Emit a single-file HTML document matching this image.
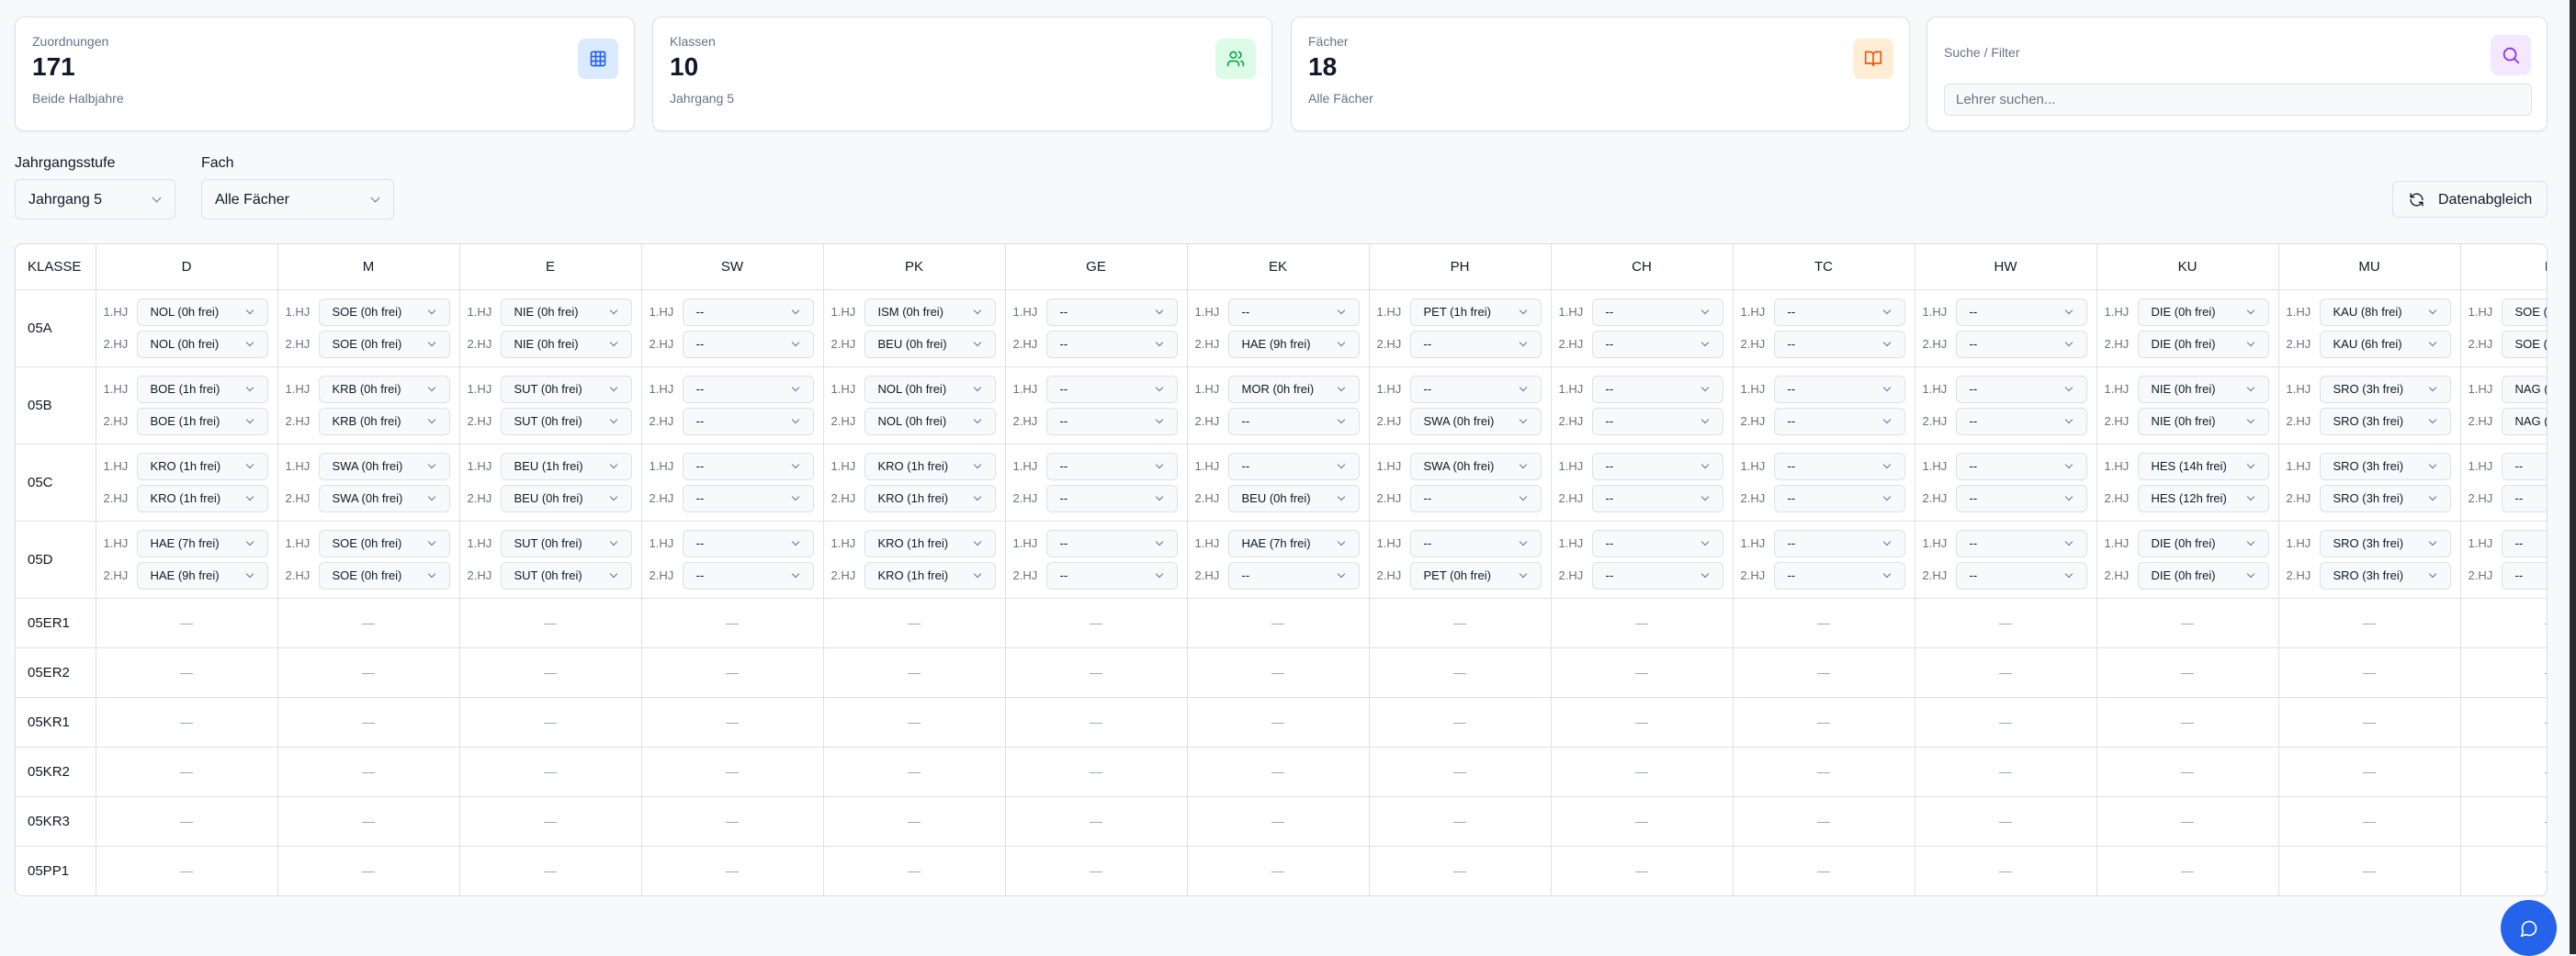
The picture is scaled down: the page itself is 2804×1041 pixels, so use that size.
<!DOCTYPE html>
<html><head><meta charset="utf-8"><style>
*{box-sizing:border-box;margin:0;padding:0}
body{width:2804px;height:1039px;background:#f8f9fb;font-family:"Liberation Sans",sans-serif;color:#111827;position:relative;overflow:hidden}
.sb{position:absolute;right:0;top:0;width:7px;height:1039px;background:#2b2b2f}
.card{position:absolute;top:18px;height:125px;background:#fff;border:1px solid #dde0e5;border-radius:10px;box-shadow:0 1px 2px rgba(0,0,0,.05)}
.card .l{position:absolute;left:18px;top:18px;font-size:14px;color:#64748b}
.card .n{position:absolute;left:18px;top:38px;font-size:28px;font-weight:bold;color:#0f172a}
.card .s{position:absolute;left:18px;top:80px;font-size:14px;color:#64748b}
.ic{position:absolute;right:17px;top:23px;width:44px;height:44px;border-radius:8px;display:flex;align-items:center;justify-content:center}
.lab{position:absolute;top:169px;font-size:16px;color:#111827}
.sel{position:absolute;top:195px;height:44px;border:1px solid #dde0e5;border-radius:6px;background:#f8f9fb;font-size:16px;padding:13px 14px}
.chev{position:absolute;right:16px;top:16px;width:7px;height:7px;border-right:1.5px solid #6b7280;border-bottom:1.5px solid #6b7280;transform:rotate(45deg)}
.btn{position:absolute;left:2604px;top:197px;width:169px;height:40px;border:1px solid #dde0e5;border-radius:6px;background:#f8f9fb;font-size:16px;padding:11px 0 0 49px}
.tw{position:absolute;left:16px;top:265px;width:2757px;height:711px;border:1px solid #d8dce2;border-radius:8px;background:#fff;overflow:hidden}
table{border-collapse:collapse;table-layout:fixed;width:2858px}
td,th{border-right:1px solid #dde0e5;border-bottom:1px solid #dde0e5}
th{height:49px;font-size:15px;font-weight:normal;color:#111827;text-align:center}
th.k{text-align:left;padding-left:13px}
td.k{font-size:15px;padding-left:13px;text-align:left;color:#111827}
tr.d td{height:84px}
tr.e td{height:54px;text-align:center;color:#9ca3af;font-size:14px}
td.c{padding:0 10px 0 8px}
.r{display:flex;align-items:center;height:30px}
.r+.r{margin-top:5px}
.r i{font-style:normal;font-size:13px;color:#6b7280;width:36px;flex:none}
.r b{position:relative;flex:1;height:30px;border:1px solid #dde0e5;border-radius:6px;background:#f8f9fb;font-weight:normal;font-size:13px;line-height:28px;padding-left:14px;color:#111827;white-space:nowrap;overflow:hidden}
.r b::after{content:"";position:absolute;right:16px;top:9px;width:5px;height:5px;border-right:1.3px solid #6b7280;border-bottom:1.3px solid #6b7280;transform:rotate(45deg)}
tr.e td.k{color:#111827;font-size:15px;text-align:left}
.fab{position:absolute;left:2722px;top:980px;width:61px;height:61px;border-radius:50%;background:#2563eb;display:flex;align-items:center;justify-content:center}
</style></head><body>
<div class="card" style="left:16px;width:675px"><div class="l">Zuordnungen</div><div class="n">171</div><div class="s">Beide Halbjahre</div>
<div class="ic" style="background:#dbeafe"><svg width="20" height="20" viewBox="0 0 24 24" fill="none" stroke="#2563eb" stroke-width="2"><rect x="3" y="3" width="18" height="18" rx="2"/><path d="M3 9h18M3 15h18M9 3v18M15 3v18"/></svg></div></div>
<div class="card" style="left:710px;width:675px"><div class="l">Klassen</div><div class="n">10</div><div class="s">Jahrgang 5</div>
<div class="ic" style="background:#dcfce7"><svg width="20" height="20" viewBox="0 0 24 24" fill="none" stroke="#16a34a" stroke-width="2" stroke-linecap="round"><path d="M16 21v-2a4 4 0 0 0-4-4H6a4 4 0 0 0-4 4v2"/><circle cx="9" cy="7" r="4"/><path d="M22 21v-2a4 4 0 0 0-3-3.87M16 3.13a4 4 0 0 1 0 7.75"/></svg></div></div>
<div class="card" style="left:1405px;width:674px"><div class="l">Fächer</div><div class="n">18</div><div class="s">Alle Fächer</div>
<div class="ic" style="background:#ffedd5"><svg width="20" height="20" viewBox="0 0 24 24" fill="none" stroke="#ea580c" stroke-width="2" stroke-linejoin="round"><path d="M2 3h6a4 4 0 0 1 4 4v14a3 3 0 0 0-3-3H2zM22 3h-6a4 4 0 0 0-4 4v14a3 3 0 0 1 3-3h7z"/></svg></div></div>
<div class="card" style="left:2097px;width:676px"><div class="l" style="top:30px">Suche / Filter</div>
<div class="ic" style="background:#f3e8ff;top:19px"><svg width="22" height="22" viewBox="0 0 24 24" fill="none" stroke="#9333ea" stroke-width="2" stroke-linecap="round"><circle cx="11" cy="11" r="7"/><path d="M21 21l-4.3-4.3"/></svg></div>
<div style="position:absolute;left:18px;top:72px;width:640px;height:35px;border:1px solid #dde0e5;border-radius:6px;background:#f8f9fb;font-size:15px;color:#6b7280;padding:8px 12px">Lehrer suchen...</div></div>
<div class="lab" style="left:16px">Jahrgangsstufe</div><div class="lab" style="left:219px">Fach</div>
<div class="sel" style="left:16px;width:175px">Jahrgang 5<span class="chev"></span></div>
<div class="sel" style="left:219px;width:210px">Alle Fächer<span class="chev"></span></div>
<div class="btn"><svg style="position:absolute;left:17px;top:11px" width="17" height="17" viewBox="0 0 24 24" fill="none" stroke="#111827" stroke-width="2" stroke-linecap="round" stroke-linejoin="round"><path d="M21 12a9 9 0 0 0-15.5-6.2L3 8M3 3v5h5M3 12a9 9 0 0 0 15.5 6.2L21 16M21 21v-5h-5"/></svg>Datenabgleich</div>
<div class="tw"><table>
<colgroup><col style="width:87px"><col span="14" style="width:198px"></colgroup>
<tr><th class="k">KLASSE</th><th>D</th><th>M</th><th>E</th><th>SW</th><th>PK</th><th>GE</th><th>EK</th><th>PH</th><th>CH</th><th>TC</th><th>HW</th><th>KU</th><th>MU</th><th>BI</th></tr>
<tr class="d"><td class="k">05A</td>
<td class="c"><div class="r"><i>1.HJ</i><b>NOL (0h frei)</b></div><div class="r"><i>2.HJ</i><b>NOL (0h frei)</b></div></td>
<td class="c"><div class="r"><i>1.HJ</i><b>SOE (0h frei)</b></div><div class="r"><i>2.HJ</i><b>SOE (0h frei)</b></div></td>
<td class="c"><div class="r"><i>1.HJ</i><b>NIE (0h frei)</b></div><div class="r"><i>2.HJ</i><b>NIE (0h frei)</b></div></td>
<td class="c"><div class="r"><i>1.HJ</i><b>--</b></div><div class="r"><i>2.HJ</i><b>--</b></div></td>
<td class="c"><div class="r"><i>1.HJ</i><b>ISM (0h frei)</b></div><div class="r"><i>2.HJ</i><b>BEU (0h frei)</b></div></td>
<td class="c"><div class="r"><i>1.HJ</i><b>--</b></div><div class="r"><i>2.HJ</i><b>--</b></div></td>
<td class="c"><div class="r"><i>1.HJ</i><b>--</b></div><div class="r"><i>2.HJ</i><b>HAE (9h frei)</b></div></td>
<td class="c"><div class="r"><i>1.HJ</i><b>PET (1h frei)</b></div><div class="r"><i>2.HJ</i><b>--</b></div></td>
<td class="c"><div class="r"><i>1.HJ</i><b>--</b></div><div class="r"><i>2.HJ</i><b>--</b></div></td>
<td class="c"><div class="r"><i>1.HJ</i><b>--</b></div><div class="r"><i>2.HJ</i><b>--</b></div></td>
<td class="c"><div class="r"><i>1.HJ</i><b>--</b></div><div class="r"><i>2.HJ</i><b>--</b></div></td>
<td class="c"><div class="r"><i>1.HJ</i><b>DIE (0h frei)</b></div><div class="r"><i>2.HJ</i><b>DIE (0h frei)</b></div></td>
<td class="c"><div class="r"><i>1.HJ</i><b>KAU (8h frei)</b></div><div class="r"><i>2.HJ</i><b>KAU (6h frei)</b></div></td>
<td class="c"><div class="r"><i>1.HJ</i><b>SOE (0h frei)</b></div><div class="r"><i>2.HJ</i><b>SOE (0h frei)</b></div></td></tr>
<tr class="d"><td class="k">05B</td>
<td class="c"><div class="r"><i>1.HJ</i><b>BOE (1h frei)</b></div><div class="r"><i>2.HJ</i><b>BOE (1h frei)</b></div></td>
<td class="c"><div class="r"><i>1.HJ</i><b>KRB (0h frei)</b></div><div class="r"><i>2.HJ</i><b>KRB (0h frei)</b></div></td>
<td class="c"><div class="r"><i>1.HJ</i><b>SUT (0h frei)</b></div><div class="r"><i>2.HJ</i><b>SUT (0h frei)</b></div></td>
<td class="c"><div class="r"><i>1.HJ</i><b>--</b></div><div class="r"><i>2.HJ</i><b>--</b></div></td>
<td class="c"><div class="r"><i>1.HJ</i><b>NOL (0h frei)</b></div><div class="r"><i>2.HJ</i><b>NOL (0h frei)</b></div></td>
<td class="c"><div class="r"><i>1.HJ</i><b>--</b></div><div class="r"><i>2.HJ</i><b>--</b></div></td>
<td class="c"><div class="r"><i>1.HJ</i><b>MOR (0h frei)</b></div><div class="r"><i>2.HJ</i><b>--</b></div></td>
<td class="c"><div class="r"><i>1.HJ</i><b>--</b></div><div class="r"><i>2.HJ</i><b>SWA (0h frei)</b></div></td>
<td class="c"><div class="r"><i>1.HJ</i><b>--</b></div><div class="r"><i>2.HJ</i><b>--</b></div></td>
<td class="c"><div class="r"><i>1.HJ</i><b>--</b></div><div class="r"><i>2.HJ</i><b>--</b></div></td>
<td class="c"><div class="r"><i>1.HJ</i><b>--</b></div><div class="r"><i>2.HJ</i><b>--</b></div></td>
<td class="c"><div class="r"><i>1.HJ</i><b>NIE (0h frei)</b></div><div class="r"><i>2.HJ</i><b>NIE (0h frei)</b></div></td>
<td class="c"><div class="r"><i>1.HJ</i><b>SRO (3h frei)</b></div><div class="r"><i>2.HJ</i><b>SRO (3h frei)</b></div></td>
<td class="c"><div class="r"><i>1.HJ</i><b>NAG (1h frei)</b></div><div class="r"><i>2.HJ</i><b>NAG (1h frei)</b></div></td></tr>
<tr class="d"><td class="k">05C</td>
<td class="c"><div class="r"><i>1.HJ</i><b>KRO (1h frei)</b></div><div class="r"><i>2.HJ</i><b>KRO (1h frei)</b></div></td>
<td class="c"><div class="r"><i>1.HJ</i><b>SWA (0h frei)</b></div><div class="r"><i>2.HJ</i><b>SWA (0h frei)</b></div></td>
<td class="c"><div class="r"><i>1.HJ</i><b>BEU (1h frei)</b></div><div class="r"><i>2.HJ</i><b>BEU (0h frei)</b></div></td>
<td class="c"><div class="r"><i>1.HJ</i><b>--</b></div><div class="r"><i>2.HJ</i><b>--</b></div></td>
<td class="c"><div class="r"><i>1.HJ</i><b>KRO (1h frei)</b></div><div class="r"><i>2.HJ</i><b>KRO (1h frei)</b></div></td>
<td class="c"><div class="r"><i>1.HJ</i><b>--</b></div><div class="r"><i>2.HJ</i><b>--</b></div></td>
<td class="c"><div class="r"><i>1.HJ</i><b>--</b></div><div class="r"><i>2.HJ</i><b>BEU (0h frei)</b></div></td>
<td class="c"><div class="r"><i>1.HJ</i><b>SWA (0h frei)</b></div><div class="r"><i>2.HJ</i><b>--</b></div></td>
<td class="c"><div class="r"><i>1.HJ</i><b>--</b></div><div class="r"><i>2.HJ</i><b>--</b></div></td>
<td class="c"><div class="r"><i>1.HJ</i><b>--</b></div><div class="r"><i>2.HJ</i><b>--</b></div></td>
<td class="c"><div class="r"><i>1.HJ</i><b>--</b></div><div class="r"><i>2.HJ</i><b>--</b></div></td>
<td class="c"><div class="r"><i>1.HJ</i><b>HES (14h frei)</b></div><div class="r"><i>2.HJ</i><b>HES (12h frei)</b></div></td>
<td class="c"><div class="r"><i>1.HJ</i><b>SRO (3h frei)</b></div><div class="r"><i>2.HJ</i><b>SRO (3h frei)</b></div></td>
<td class="c"><div class="r"><i>1.HJ</i><b>--</b></div><div class="r"><i>2.HJ</i><b>--</b></div></td></tr>
<tr class="d"><td class="k">05D</td>
<td class="c"><div class="r"><i>1.HJ</i><b>HAE (7h frei)</b></div><div class="r"><i>2.HJ</i><b>HAE (9h frei)</b></div></td>
<td class="c"><div class="r"><i>1.HJ</i><b>SOE (0h frei)</b></div><div class="r"><i>2.HJ</i><b>SOE (0h frei)</b></div></td>
<td class="c"><div class="r"><i>1.HJ</i><b>SUT (0h frei)</b></div><div class="r"><i>2.HJ</i><b>SUT (0h frei)</b></div></td>
<td class="c"><div class="r"><i>1.HJ</i><b>--</b></div><div class="r"><i>2.HJ</i><b>--</b></div></td>
<td class="c"><div class="r"><i>1.HJ</i><b>KRO (1h frei)</b></div><div class="r"><i>2.HJ</i><b>KRO (1h frei)</b></div></td>
<td class="c"><div class="r"><i>1.HJ</i><b>--</b></div><div class="r"><i>2.HJ</i><b>--</b></div></td>
<td class="c"><div class="r"><i>1.HJ</i><b>HAE (7h frei)</b></div><div class="r"><i>2.HJ</i><b>--</b></div></td>
<td class="c"><div class="r"><i>1.HJ</i><b>--</b></div><div class="r"><i>2.HJ</i><b>PET (0h frei)</b></div></td>
<td class="c"><div class="r"><i>1.HJ</i><b>--</b></div><div class="r"><i>2.HJ</i><b>--</b></div></td>
<td class="c"><div class="r"><i>1.HJ</i><b>--</b></div><div class="r"><i>2.HJ</i><b>--</b></div></td>
<td class="c"><div class="r"><i>1.HJ</i><b>--</b></div><div class="r"><i>2.HJ</i><b>--</b></div></td>
<td class="c"><div class="r"><i>1.HJ</i><b>DIE (0h frei)</b></div><div class="r"><i>2.HJ</i><b>DIE (0h frei)</b></div></td>
<td class="c"><div class="r"><i>1.HJ</i><b>SRO (3h frei)</b></div><div class="r"><i>2.HJ</i><b>SRO (3h frei)</b></div></td>
<td class="c"><div class="r"><i>1.HJ</i><b>--</b></div><div class="r"><i>2.HJ</i><b>--</b></div></td></tr>
<tr class="e"><td class="k">05ER1</td><td>—</td><td>—</td><td>—</td><td>—</td><td>—</td><td>—</td><td>—</td><td>—</td><td>—</td><td>—</td><td>—</td><td>—</td><td>—</td><td>—</td></tr>
<tr class="e"><td class="k">05ER2</td><td>—</td><td>—</td><td>—</td><td>—</td><td>—</td><td>—</td><td>—</td><td>—</td><td>—</td><td>—</td><td>—</td><td>—</td><td>—</td><td>—</td></tr>
<tr class="e"><td class="k">05KR1</td><td>—</td><td>—</td><td>—</td><td>—</td><td>—</td><td>—</td><td>—</td><td>—</td><td>—</td><td>—</td><td>—</td><td>—</td><td>—</td><td>—</td></tr>
<tr class="e"><td class="k">05KR2</td><td>—</td><td>—</td><td>—</td><td>—</td><td>—</td><td>—</td><td>—</td><td>—</td><td>—</td><td>—</td><td>—</td><td>—</td><td>—</td><td>—</td></tr>
<tr class="e"><td class="k">05KR3</td><td>—</td><td>—</td><td>—</td><td>—</td><td>—</td><td>—</td><td>—</td><td>—</td><td>—</td><td>—</td><td>—</td><td>—</td><td>—</td><td>—</td></tr>
<tr class="e"><td class="k">05PP1</td><td>—</td><td>—</td><td>—</td><td>—</td><td>—</td><td>—</td><td>—</td><td>—</td><td>—</td><td>—</td><td>—</td><td>—</td><td>—</td><td>—</td></tr>
</table></div>
<div class="fab"><svg width="20" height="20" viewBox="0 0 24 24" fill="none" stroke="#fff" stroke-width="2" stroke-linejoin="round"><path d="M7.9 20A9 9 0 1 0 4 16.1L2 22z"/></svg></div>
<div class="sb"></div>
</body></html>
